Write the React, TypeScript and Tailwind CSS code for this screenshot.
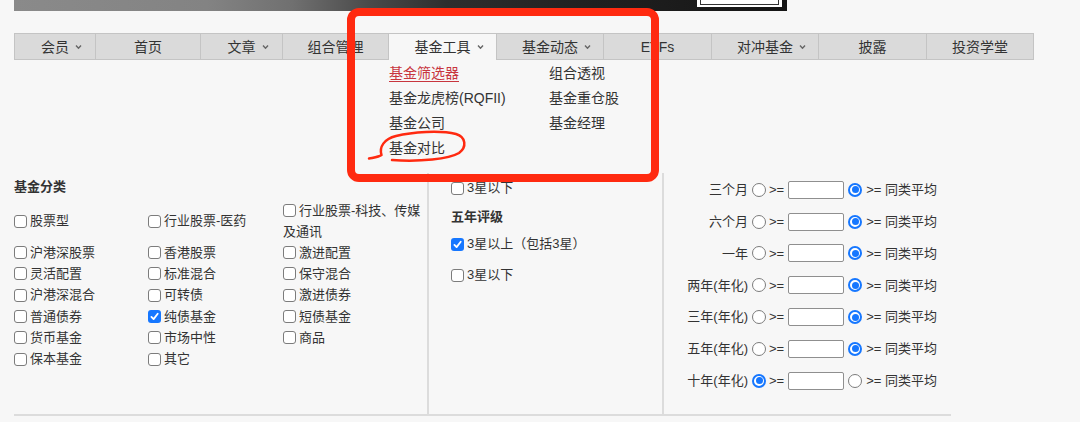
import React from "react";

const FONT = "font-['Liberation_Sans','Noto_Sans_CJK_SC',sans-serif]";

function Caret() {
  return (
    <svg
      width="7"
      height="5"
      viewBox="0 0 7 5"
      className="absolute left-full top-1/2 -translate-y-1/2 ml-[6px]"
    >
      <path d="M1 1 L3.5 3.8 L6 1" fill="none" stroke="#666" strokeWidth="1.4" />
    </svg>
  );
}

type Tab = { label: string; w: string; caret?: boolean; active?: boolean };

const tabs: Tab[] = [
  { label: "会员", w: "w-[82px]", caret: true },
  { label: "首页", w: "w-[105px]" },
  { label: "文章", w: "w-[82px]", caret: true },
  { label: "组合管理", w: "w-[106px]" },
  { label: "基金工具", w: "w-[108px]", caret: true, active: true },
  { label: "基金动态", w: "w-[107px]", caret: true },
  { label: "ETFs", w: "w-[108px]" },
  { label: "对冲基金", w: "w-[107px]", caret: true },
  { label: "披露", w: "w-[108px]" },
  { label: "投资学堂", w: "w-[107px]" },
];

function Box({ checked }: { checked?: boolean }) {
  return checked ? (
    <span className="inline-flex shrink-0 w-[13px] h-[13px] rounded-[3px] bg-[#1677ff] items-center justify-center">
      <svg width="9" height="9" viewBox="0 0 9 9">
        <path
          d="M1.4 4.9 L3.6 7.1 L7.7 1.7"
          fill="none"
          stroke="white"
          strokeWidth="1.8"
          strokeLinecap="round"
          strokeLinejoin="round"
        />
      </svg>
    </span>
  ) : (
    <span className="inline-block shrink-0 w-[13px] h-[13px] rounded-[3px] border border-[#7c7c7c] bg-white" />
  );
}

function Radio({ checked }: { checked?: boolean }) {
  return checked ? (
    <span className="flex shrink-0 w-[14px] h-[14px] rounded-full border-2 border-[#1677ff] bg-white items-center justify-center">
      <span className="block w-[7px] h-[7px] rounded-full bg-[#1677ff]" />
    </span>
  ) : (
    <span className="block shrink-0 w-[14px] h-[14px] rounded-full border border-[#7c7c7c] bg-white" />
  );
}

function Opt({ label, checked }: { label: string; checked?: boolean }) {
  return (
    <div className="flex items-center gap-[3px]">
      <Box checked={checked} />
      <span>{label}</span>
    </div>
  );
}

const rows: [string, string | null, string | null, boolean?][] = [
  ["沪港深股票", "香港股票", "激进配置"],
  ["灵活配置", "标准混合", "保守混合"],
  ["沪港深混合", "可转债", "激进债券"],
  ["普通债券", "纯债基金", "短债基金", true],
  ["货币基金", "市场中性", "商品"],
  ["保本基金", "其它", null],
];

const perf: [string, boolean][] = [
  ["三个月", false],
  ["六个月", false],
  ["一年", false],
  ["两年(年化)", false],
  ["三年(年化)", false],
  ["五年(年化)", false],
  ["十年(年化)", true],
];

export default function App() {
  return (
    <div
      className={`relative w-[1080px] h-[422px] overflow-hidden bg-[#f7f7f7] text-[#333] ${FONT}`}
    >
      {/* banner image strip */}
      <div className="relative ml-[14px] w-[773px] h-[11px] bg-[linear-gradient(to_right,#8a8a8a_0%,#838383_25%,#707070_36%,#4a4a4a_46%,#2e2e2e_56%,#202020_75%,#151515_100%)]">
        <div className="absolute left-[683px] top-0 w-[85px] h-[7px] bg-white">
          <div className="mx-[3px] h-[5px] border-x border-b border-[#333]" />
        </div>
      </div>

      {/* nav */}
      <div className="mt-[22px] ml-[14px] flex h-[27px]">
        {tabs.map((t, i) => (
          <div
            key={t.label}
            className={`${t.w} h-full flex items-center justify-center text-[14px] border-t border-r border-[#c4c4c4] ${
              i === 0 ? "border-l" : ""
            } ${t.active ? "bg-[#f7f7f7]" : "bg-[#dadada] border-b"}`}
          >
            <span className="relative leading-[20px]">
              {t.label}
              {t.caret && <Caret />}
            </span>
          </div>
        ))}
      </div>

      <div className="h-[113px]" />

      {/* panels */}
      <div className="ml-[14px] w-[937px] h-[243px] flex border-b-2 border-[#dcdcdc] text-[13px]">
        {/* left */}
        <div className="w-[415px] border-r-2 border-[#dcdcdc] pt-[4px]">
          <div className="h-[20px] leading-[20px] font-bold">基金分类</div>
          <div className="mt-[3px]">
            <div className="flex h-[42px]">
              <div className="w-[134px] flex items-center">
                <Opt label="股票型" />
              </div>
              <div className="w-[135px] flex items-center">
                <Opt label="行业股票-医药" />
              </div>
              <div className="leading-[21px]">
                <div className="flex items-center gap-[3px]">
                  <Box />
                  <span>行业股票-科技、传媒</span>
                </div>
                <div>及通讯</div>
              </div>
            </div>
            {rows.map(([a, b, c, chk]) => (
              <div key={a} className="flex h-[21.3px] items-center">
                <div className="w-[134px]">
                  <Opt label={a} />
                </div>
                <div className="w-[135px]">{b && <Opt label={b} checked={!!chk} />}</div>
                <div>{c && <Opt label={c} />}</div>
              </div>
            ))}
          </div>
        </div>

        {/* middle */}
        <div className="w-[235px] border-r-2 border-[#dcdcdc] pl-[22px]">
          <div className="mt-[5px] h-[20px] flex items-center">
            <Opt label="3星以下" />
          </div>
          <div className="mt-[9px] h-[20px] leading-[20px] font-bold">五年评级</div>
          <div className="mt-[7px] h-[20px] flex items-center">
            <Opt label="3星以上（包括3星）" checked />
          </div>
          <div className="mt-[11px] h-[20px] flex items-center">
            <Opt label="3星以下" />
          </div>
        </div>

        {/* right */}
        <div className="flex-1 pt-[1px]">
          {perf.map(([label, first]) => (
            <div key={label} className="flex items-center h-[31.8px]">
              <span className="w-[84px] text-right">{label}</span>
              <span className="ml-[4px]">
                <Radio checked={first} />
              </span>
              <span className="ml-[3px]">&gt;=</span>
              <span className="ml-[4px] block w-[56px] h-[18px] bg-white border border-[#8f8f8f] rounded-[2px]" />
              <span className="ml-[4px]">
                <Radio checked={!first} />
              </span>
              <span className="ml-[4px]">&gt;= 同类平均</span>
            </div>
          ))}
        </div>
      </div>

      {/* dropdown menu */}
      <div className="absolute left-[389px] top-[60px] pt-[1px] text-[14px]">
        <div className="grid grid-cols-[160px_120px]">
          <div className="h-[25px] leading-[25px]">
            <span className="text-[#c8353e] underline decoration-[#c8353e] underline-offset-[3px]">
              基金筛选器
            </span>
          </div>
          <div className="h-[25px] leading-[25px]">组合透视</div>
          <div className="h-[25px] leading-[25px]">基金龙虎榜(RQFII)</div>
          <div className="h-[25px] leading-[25px]">基金重仓股</div>
          <div className="h-[25px] leading-[25px]">基金公司</div>
          <div className="h-[25px] leading-[25px]">基金经理</div>
          <div className="h-[25px] leading-[25px]">基金对比</div>
        </div>
      </div>

      {/* annotation: red box */}
      <div className="absolute left-[347px] top-[8px] w-[312px] h-[174px] border-[8px] border-[#ff2a10] rounded-[12px] pointer-events-none" />

      {/* annotation: hand-drawn circle */}
      <svg
        className="absolute left-0 top-0 pointer-events-none"
        width="1080"
        height="422"
        viewBox="0 0 1080 422"
      >
        <path
          d="M369 158.5 C 374 157.5, 379 157, 381.5 155 C 379 147, 384 139, 396 136 C 412 132, 440 130, 456 134 C 466 137, 467 147, 459 153 C 449 159, 420 162, 392 160"
          fill="none"
          stroke="#ff2a10"
          strokeWidth="2.5"
          strokeLinecap="round"
          strokeLinejoin="round"
        />
      </svg>
    </div>
  );
}
